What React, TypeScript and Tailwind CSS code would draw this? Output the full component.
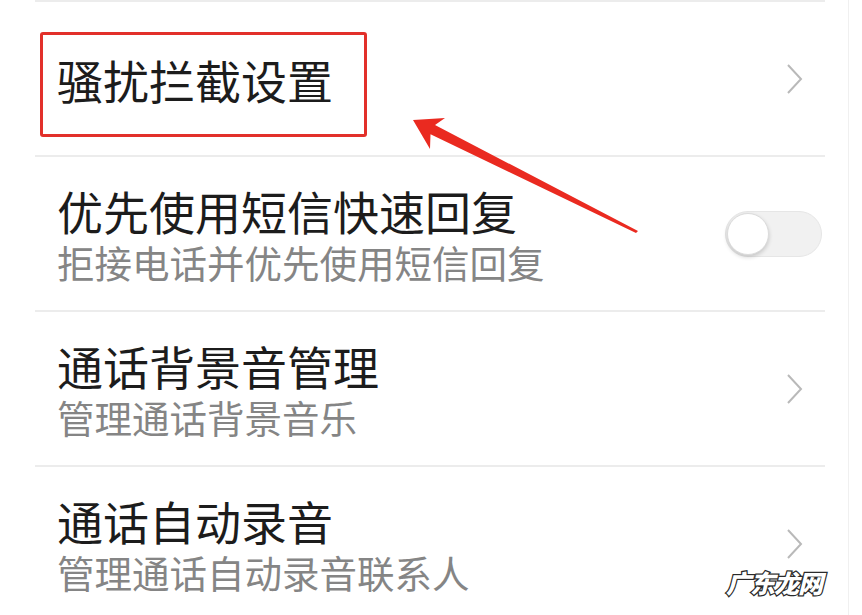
import React from 'react';

type Row = {
  title: string;
  subtitle?: string;
  control: 'chevron' | 'switch';
};

const rows: Row[] = [
  { title: '骚扰拦截设置', control: 'chevron' },
  { title: '优先使用短信快速回复', subtitle: '拒接电话并优先使用短信回复', control: 'switch' },
  { title: '通话背景音管理', subtitle: '管理通话背景音乐', control: 'chevron' },
  { title: '通话自动录音', subtitle: '管理通话自动录音联系人', control: 'chevron' },
];

const Chevron: React.FC = () => (
  <svg width="18" height="32" viewBox="0 0 18 32" className="mr-[21px]">
    <polyline points="2,2 15,16 2,30" fill="none" stroke="#b9b9b9" strokeWidth="2" strokeLinejoin="miter" />
  </svg>
);

const Switch: React.FC = () => (
  <div className="relative mr-[3px] h-[46px] w-[97px] rounded-full border border-[#e6e6e6] bg-[#f1f1f1]">
    <div className="absolute left-[1px] top-[1px] h-[42px] w-[42px] rounded-full border border-[#dcdcdc] bg-white shadow-[0_2px_4px_rgba(0,0,0,0.18)]" />
  </div>
);

const Divider: React.FC = () => <div className="h-[2px] w-full bg-[#ececec]" />;

const SettingRow: React.FC<{ row: Row }> = ({ row }) => (
  <div className="flex h-[153px] items-center justify-between">
    <div className="flex flex-col pl-[22px]">
      <span className="text-[46px] leading-[52px] text-[#1c1c1c]">{row.title}</span>
      {row.subtitle && (
        <span className="mt-[4px] text-[37.5px] leading-[44px] text-[#858585]">{row.subtitle}</span>
      )}
    </div>
    {row.control === 'chevron' ? <Chevron /> : <Switch />}
  </div>
);

export default function App() {
  return (
    <div
      className="relative flex h-[615px] w-[862px] overflow-hidden bg-white"
      style={{ fontFamily: '"Noto Sans CJK SC", "Noto Sans", sans-serif' }}
    >
      <div className="ml-[35px] w-[790px]">
        <Divider />
        {rows.map((row, i) => (
          <React.Fragment key={row.title}>
            {i > 0 && <Divider />}
            <SettingRow row={row} />
          </React.Fragment>
        ))}
      </div>
      <div className="ml-[23px] h-full w-[1px] bg-[#f0f0f0]" />

      {/* annotation: red box round the first item */}
      <div className="pointer-events-none absolute left-[40px] top-[32px] h-[105px] w-[327px] rounded-[3px] border-[3px] border-[#e2302a]" />

      {/* annotation: arrow */}
      <svg className="pointer-events-none absolute left-0 top-0" width="862" height="615" viewBox="0 0 862 615">
        <polygon
          points="413,120 445,118 435,125 638,231 636,233 430.5,134.3 430,149"
          fill="#ea2a20"
        />
      </svg>

      {/* watermark */}
      <div className="absolute left-[726px] top-[570px] text-[25px] font-black italic leading-none tracking-[-1px] text-white [-webkit-text-stroke:2.5px_#2a2a2a] [paint-order:stroke_fill]">
        广东龙网
      </div>
    </div>
  );
}
